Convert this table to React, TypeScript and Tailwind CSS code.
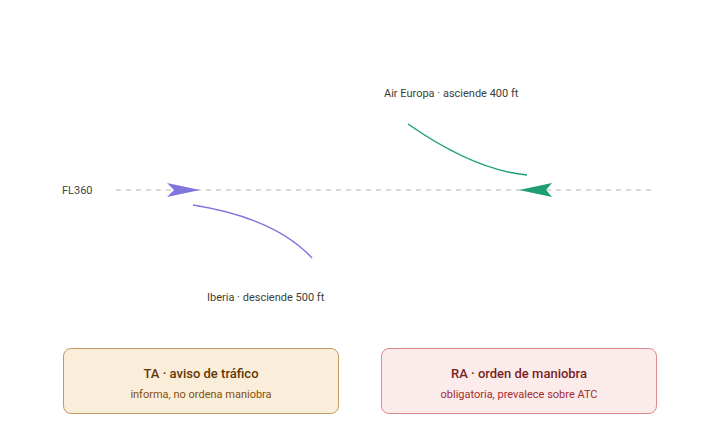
import React from "react";

const font = { fontFamily: "Roboto, 'Noto Sans', sans-serif" };

function Diagram() {
  return (
    <svg width="720" height="330" viewBox="0 0 720 330" className="block">
      <text x="62" y="194" fontSize="11" fill="#444441" style={font}>
        FL360
      </text>
      <line x1="116" y1="190" x2="654" y2="190" stroke="#b4b2a9" strokeWidth="1" strokeDasharray="5 5" />

      {/* Iberia */}
      <polygon points="167,183 200,190 167,197 174,190" fill="#7F77DD" />
      <path d="M193 205 Q 275 218 312 258" fill="none" stroke="#7F77DD" strokeWidth="1.5" />
      <text x="207" y="301" fontSize="11" fill="#3d3d3a" style={font}>
        Iberia · desciende 500 ft
      </text>

      {/* Air Europa */}
      <polygon points="552,183 519,190 552,197 546,190" fill="#1D9E75" />
      <path d="M408 124 Q 474 170 527 175" fill="none" stroke="#1D9E75" strokeWidth="1.5" />
      <text x="384" y="97" fontSize="11" fill="#3d3d3a" style={font}>
        Air Europa · asciende 400 ft
      </text>
    </svg>
  );
}

export default function App() {
  return (
    <div className="w-[720px] h-[444px] bg-white overflow-hidden" style={font}>
      <Diagram />
      <div className="flex gap-[42px] px-[63px] mt-[18px]">
        <div className="flex-1 h-[66px] rounded-lg border border-[#c59a62] bg-[#faeeda] flex flex-col items-center pt-4 pb-3 gap-1">
          <div className="text-[13px] leading-[18px] font-medium text-[#633806]">TA · aviso de tráfico</div>
          <div className="text-[11px] leading-[16px] text-[#854f0b]">informa, no ordena maniobra</div>
        </div>
        <div className="flex-1 h-[66px] rounded-lg border border-[#dc8a8a] bg-[#fcebeb] flex flex-col items-center pt-4 pb-3 gap-1">
          <div className="text-[13px] leading-[18px] font-medium text-[#791f1f]">RA · orden de maniobra</div>
          <div className="text-[11px] leading-[16px] text-[#a32d2d]">obligatoria, prevalece sobre ATC</div>
        </div>
      </div>
    </div>
  );
}
